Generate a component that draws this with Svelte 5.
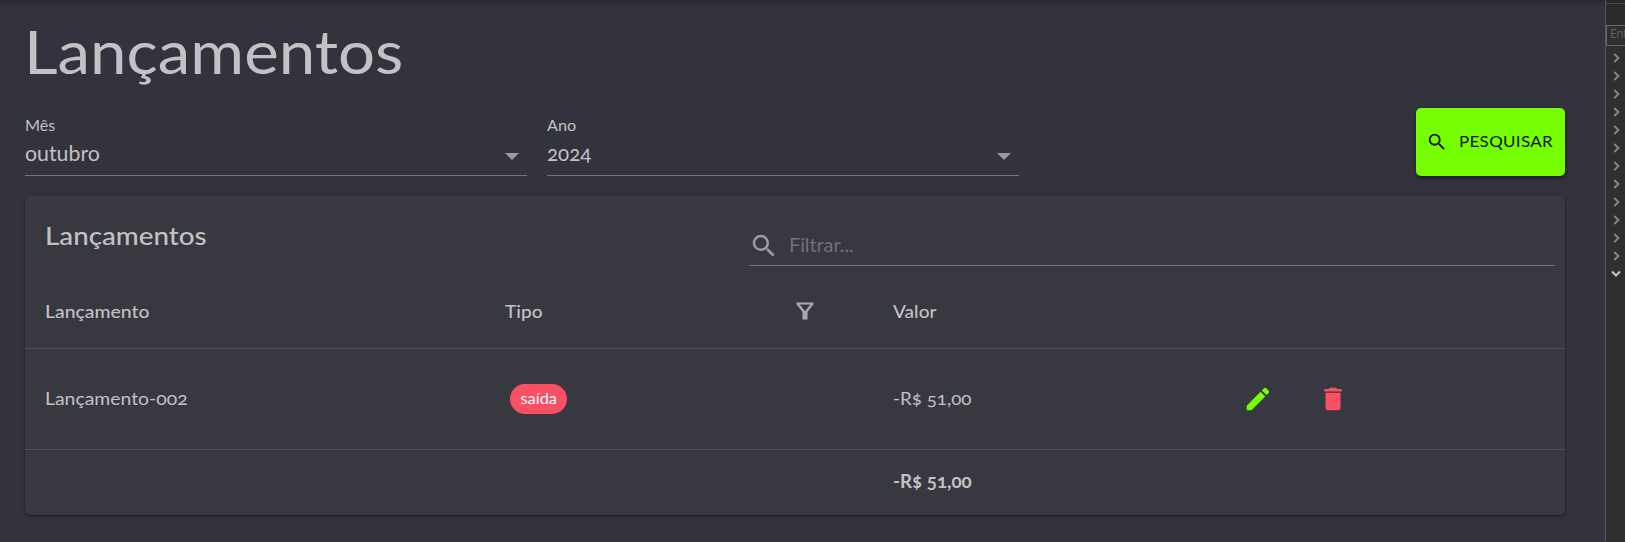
<script>
  const fields = [
    { label: 'Mês', value: 'outubro', kind: 'month' },
    { label: 'Ano', value: '2024', kind: 'year' }
  ];
  const closedRows = Array.from({ length: 12 });
</script>

<div class="screen">
  <main>
    <h1><span class="wide">Lançamentos</span></h1>

    <div class="toolbar">
      {#each fields as f}
        <div class="field {f.kind}">
          <span class="label wide">{f.label}</span>
          <div class="select">
            <span class="value wide">{f.value}</span>
            <svg class="caret" width="14" height="7" viewBox="0 0 14 7"><path d="M0 0h14L7 7z" /></svg>
          </div>
        </div>
      {/each}
      <button>
        <svg width="22" height="22" viewBox="0 0 24 24"><path d="M15.5 14h-.79l-.28-.27A6.471 6.471 0 0 0 16 9.5 6.5 6.5 0 1 0 9.5 16c1.61 0 3.09-.59 4.23-1.57l.27.28v.79l5 4.99L20.49 19l-4.99-5zm-6 0C7.01 14 5 11.99 5 9.5S7.01 5 9.5 5 14 7.01 14 9.5 11.99 14 9.5 14z" /></svg>
        <span class="wide">PESQUISAR</span>
      </button>
    </div>

    <section class="card">
      <header>
        <h2><span class="wide">Lançamentos</span></h2>
        <div class="filter">
          <svg width="30" height="30" viewBox="0 0 24 24"><path d="M15.5 14h-.79l-.28-.27A6.471 6.471 0 0 0 16 9.5 6.5 6.5 0 1 0 9.5 16c1.61 0 3.09-.59 4.23-1.57l.27.28v.79l5 4.99L20.49 19l-4.99-5zm-6 0C7.01 14 5 11.99 5 9.5S7.01 5 9.5 5 14 7.01 14 9.5 11.99 14 9.5 14z" /></svg>
          <span>Filtrar...</span>
        </div>
      </header>

      <div class="row head">
        <span class="wide">Lançamento</span>
        <span class="type"><span class="wide short">Tipo</span>
          <svg width="18" height="18" viewBox="0 0 18 18"><path fill-rule="evenodd" d="M.5.5h17v1.700L11.500 10v7.500h-5V10L.5 2.200zM3.700 2.500L9 9.300l5.300-6.800z" /></svg>
        </span>
        <span class="wide short">Valor</span>
        <span></span>
      </div>
      <div class="row body">
        <span class="wide name">Lançamento-002</span>
        <span><span class="badge"><span>saída</span></span></span>
        <span class="wide amount">-R$ 51,00</span>
        <span class="actions">
          <svg class="edit" width="30" height="30" viewBox="0 0 24 24"><path d="M3 17.46v3.04c0 .28.22.5.5.5h3.04c.13 0 .26-.05.35-.15L17.81 9.94l-3.75-3.75L3.15 17.1c-.1.1-.15.22-.15.36zM20.71 7.04a.996.996 0 0 0 0-1.41l-2.34-2.34a.996.996 0 0 0-1.41 0l-1.83 1.83 3.75 3.75z" /></svg>
          <svg class="remove" width="30" height="30" viewBox="0 0 24 24"><path d="M6 19c0 1.100.9 2 2 2h8c1.100 0 2-.9 2-2V7H6zM19 4h-3.500l-1-1h-5l-1 1H5v2h14z" /></svg>
        </span>
      </div>
      <div class="row foot">
        <span></span>
        <span></span>
        <span class="wide amount">-R$ 51,00</span>
        <span></span>
      </div>
    </section>
  </main>

  <aside>
    <div class="tabs"></div>
    <div class="search"><span>Ent</span></div>
    <div class="tree">
      {#each closedRows as _}
        <div class="node"><svg width="8" height="10" viewBox="0 0 8 10"><path d="M1.300 1l4.200 4-4.200 4" /></svg></div>
      {/each}
      <div class="node open"><svg width="10" height="8" viewBox="0 0 10 8"><path d="M1 1.500l4 4 4-4" /></svg></div>
    </div>
  </aside>
</div>

<style>
  :global(body) { background: #33333d; }
  .screen {
    display: flex;
    width: 1625px;
    height: 542px;
    overflow: hidden;
    font-family: Lato, sans-serif;
    font-variant-numeric: oldstyle-nums;
    color: #c2c1c4;
    background: #33333d;
  }
  svg { display: block; fill: currentColor; flex: none; }
  .wide { display: inline-block; transform: scaleX(1.077); transform-origin: left; }
  main {
    box-sizing: border-box;
    width: 1605px;
    flex: none;
    padding: 22px 40px 0 25px;
    background: linear-gradient(#26252d, #302f38 4px, #33333d 9px);
  }
  h1 {
    margin: 0 0 0 -1px;
    height: 86px;
    font-size: 60px;
    line-height: 59px;
    font-weight: 400;
  }
  h1 .wide { transform: scaleX(1.09); }
  .toolbar { display: flex; height: 68px; }
  .field {
    box-sizing: border-box;
    display: flex;
    flex-direction: column;
    border-bottom: 1px solid #747379;
    padding-top: 8px;
  }
  .month { width: 502px; margin-right: 20px; }
  .year { width: 472px; }
  .label { font-size: 15px; line-height: 18px; }
  .select { display: flex; justify-content: space-between; align-items: center; padding: 7px 8px 0 0; }
  .value { font-size: 20.5px; line-height: 24px; transform: scaleX(1.04); }
  .year .value { transform: none; }
  .caret { color: #9b9aa0; margin-top: 7px; }
  button {
    display: flex;
    align-items: center;
    width: 149px;
    height: 68px;
    margin-left: auto;
    padding: 0 0 0 10px;
    gap: 11px;
    border: 0;
    border-radius: 5px;
    background: #76ff03;
    color: #0a1400;
    font-family: inherit;
    font-size: 16px;
    letter-spacing: 0.3px;
    white-space: nowrap;
    box-shadow: 0 3px 3px -1px rgba(0,0,0,.3), 0 2px 6px rgba(0,0,0,.25);
  }
  button .wide { transform: scaleX(1.06); padding-bottom: 3px; }
  .card {
    margin-top: 20px;
    height: 319px;
    border-radius: 5px;
    background: #383840;
    box-shadow: 0 1px 2px rgba(0,0,0,.45), 0 1px 4px rgba(0,0,0,.12);
  }
  header { display: flex; justify-content: space-between; height: 77px; padding: 0 10px 0 20px; }
  h2 { margin: 24px 0 0; font-size: 25px; line-height: 30px; font-weight: 500; }
  h2 .wide { transform: scaleX(1.11); }
  .filter {
    box-sizing: border-box;
    display: flex;
    align-items: center;
    width: 806px;
    height: 39px;
    margin-top: 31px;
    border-bottom: 1px solid #77777c;
    color: #9e9da2;
  }
  .filter span { margin-left: 10px; padding-bottom: 4px; font-size: 20px; letter-spacing: -0.1px; color: #717177; }
  .row {
    box-sizing: border-box;
    display: grid;
    grid-template-columns: 460px 388px 323px 1fr;
    align-items: center;
    padding-left: 20px;
    border-bottom: 1px solid #515155;
    font-size: 18px;
  }
  .head { height: 76px; font-weight: 500; }
  .body { height: 101px; }
  .foot { height: 65px; border: 0; font-weight: 700; }
  .short { transform: scaleX(1.06); }
  .name { padding-bottom: 2px; }
  .amount { transform: scaleX(1.043); padding-bottom: 2px; }
  .foot .amount { padding-bottom: 3px; }
  .type { display: flex; justify-content: space-between; align-items: center; padding-right: 79px; }
  .type svg { color: #aaa9ad; }
  .badge {
    display: inline-flex;
    align-items: center;
    justify-content: center;
    width: 57px;
    height: 30px;
    margin-left: 5px;
    border-radius: 15px;
    background: #fa5064;
    color: #fff;
    font-size: 15px;
  }
  .badge span { transform: scaleX(1.09); padding-bottom: 2px; }
  .actions { display: flex; gap: 45px; padding-left: 27px; }
  .edit { color: #76ff03; }
  .remove { color: #fa5064; }
  aside { width: 20px; box-sizing: border-box; flex: none; border-left: 1px solid #57565b; background: #2f2f2f; overflow: hidden; }
  .tabs { box-sizing: border-box; height: 25px; border-top: 4px solid #29292a; background: #2a2a2a; }
  .tabs::before { content: ''; display: block; height: 1px; margin-top: -1px; background: #4a4a4a; }
  .search {
    box-sizing: border-box;
    width: 60px;
    height: 21px;
    padding-left: 3px;
    border: 1px solid #68686a;
    font: 12px/16px "Open Sans", sans-serif;
    letter-spacing: -0.5px;
    color: #626262;
  }
  .tree { padding-top: 3px; }
  .node { display: flex; align-items: center; height: 18px; padding-left: 7px; }
  .node svg { fill: none; stroke: #88888a; stroke-width: 1.9; }
  .node.open { padding-left: 5px; height: 17px; }
  .node.open svg { stroke: #c8c8c8; stroke-width: 2; }
</style>
